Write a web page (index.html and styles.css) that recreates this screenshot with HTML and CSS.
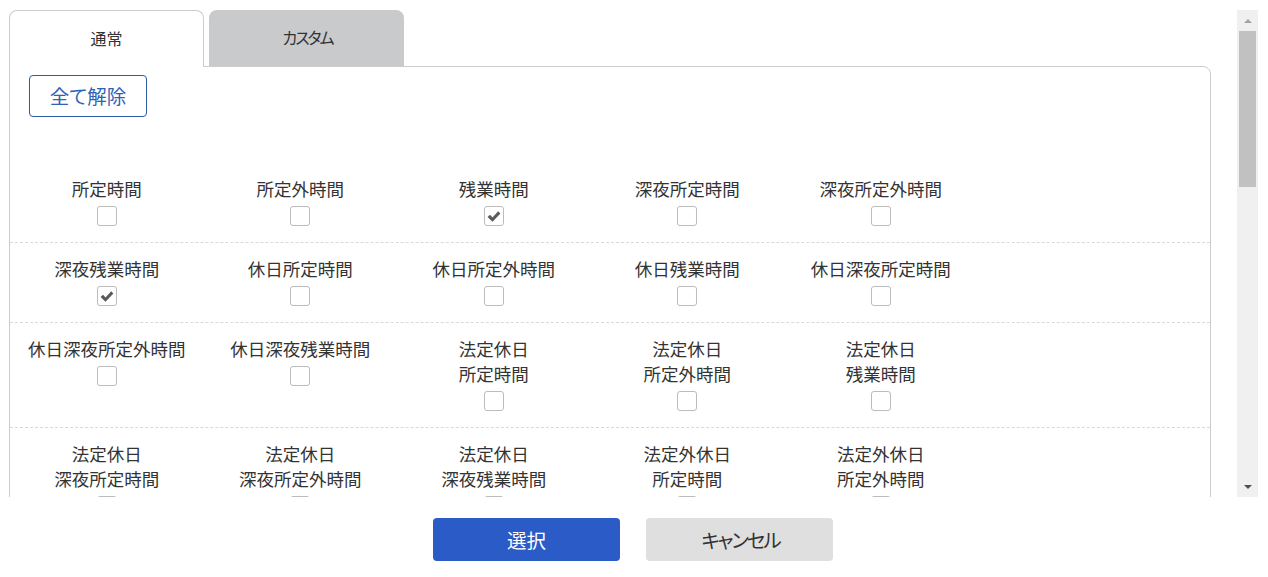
FILE: index.html
```html
<!DOCTYPE html>
<html lang="ja">
<head>
<meta charset="utf-8">
<title>選択</title>
<link rel="stylesheet" href="styles.css">
</head>
<body>
<div class="page">
  <div class="scroll-area">
    <div class="scroll-content">
      <div class="tabs">
        <div class="tab tab-active">通常</div>
        <div class="tab tab-inactive"><span class="kana">カスタム</span></div>
      </div>
      <div class="panel">
        <button class="btn-clear">全て解除</button>
        <div class="rows">
          <div class="row">
            <div class="cell"><div class="label">所定時間</div><span class="cb"></span></div>
            <div class="cell"><div class="label">所定外時間</div><span class="cb"></span></div>
            <div class="cell"><div class="label">残業時間</div><span class="cb checked"><svg viewBox="0 0 18 18"><path d="M2.6 10 L5 7.8 L7.5 10.4 L13.2 4.2 L15.4 6.4 L7.5 14.8 Z"/></svg></span></div>
            <div class="cell"><div class="label">深夜所定時間</div><span class="cb"></span></div>
            <div class="cell"><div class="label">深夜所定外時間</div><span class="cb"></span></div>
          </div>
          <div class="row">
            <div class="cell"><div class="label">深夜残業時間</div><span class="cb checked"><svg viewBox="0 0 18 18"><path d="M2.6 10 L5 7.8 L7.5 10.4 L13.2 4.2 L15.4 6.4 L7.5 14.8 Z"/></svg></span></div>
            <div class="cell"><div class="label">休日所定時間</div><span class="cb"></span></div>
            <div class="cell"><div class="label">休日所定外時間</div><span class="cb"></span></div>
            <div class="cell"><div class="label">休日残業時間</div><span class="cb"></span></div>
            <div class="cell"><div class="label">休日深夜所定時間</div><span class="cb"></span></div>
          </div>
          <div class="row">
            <div class="cell"><div class="label">休日深夜所定外時間</div><span class="cb"></span></div>
            <div class="cell"><div class="label">休日深夜残業時間</div><span class="cb"></span></div>
            <div class="cell"><div class="label">法定休日<br>所定時間</div><span class="cb"></span></div>
            <div class="cell"><div class="label">法定休日<br>所定外時間</div><span class="cb"></span></div>
            <div class="cell"><div class="label">法定休日<br>残業時間</div><span class="cb"></span></div>
          </div>
          <div class="row">
            <div class="cell"><div class="label">法定休日<br>深夜所定時間</div><span class="cb"></span></div>
            <div class="cell"><div class="label">法定休日<br>深夜所定外時間</div><span class="cb"></span></div>
            <div class="cell"><div class="label">法定休日<br>深夜残業時間</div><span class="cb"></span></div>
            <div class="cell"><div class="label">法定外休日<br>所定時間</div><span class="cb"></span></div>
            <div class="cell"><div class="label">法定外休日<br>所定外時間</div><span class="cb"></span></div>
          </div>
        </div>
      </div>
    </div>
    <div class="scrollbar">
      <div class="sb-btn"><span class="arrow-up"></span></div>
      <div class="sb-thumb"></div>
      <div class="sb-track"></div>
      <div class="sb-btn"><span class="arrow-down"></span></div>
    </div>
  </div>
  <div class="footer">
    <button class="btn btn-primary">選択</button>
    <button class="btn btn-secondary"><span class="kana">キャンセル</span></button>
  </div>
</div>
</body>
</html>
```
FILE: styles.css
```css
* { box-sizing: border-box; }
html, body {
  margin: 0;
  padding: 0;
  background: #fff;
  font-family: "Noto Sans CJK JP", "Noto Sans", sans-serif;
  color: #333;
}
.page {
  width: 1268px;
  height: 577px;
  overflow: hidden;
}
.scroll-area {
  display: flex;
  margin-top: 10px;
  width: 1258px;
  height: 487px;
}
.scroll-content {
  flex: 1;
  overflow: hidden;
  padding-left: 9px;
}
.tabs {
  display: flex;
  gap: 5px;
  height: 57px;
  margin-bottom: -1px;
  position: relative;
  z-index: 1;
}
.tab {
  width: 195px;
  display: flex;
  align-items: center;
  justify-content: center;
  font-size: 16px;
  color: #333;
  border-radius: 8px 8px 0 0;
  padding-bottom: 2px;
  font-feature-settings: "palt";
}
.kana {
  letter-spacing: -2px;
  margin-right: -2px;
}
.tab-active {
  height: 57px;
  background: #fff;
  border: 1px solid #ccc;
  border-bottom: none;
}
.tab-inactive {
  height: 56px;
  width: 195px;
  background: #c9cacc;
}
.panel {
  width: 1202px;
  border: 1px solid #ccc;
  border-radius: 0 8px 0 0;
  min-height: 600px;
}
.btn-clear {
  display: block;
  margin: 8px 0 0 19px;
  width: 118px;
  height: 42px;
  border: 1px solid #2c5ca8;
  border-radius: 4px;
  background: #fff;
  color: #2e62b4;
  font-family: inherit;
  font-size: 19.5px;
  padding: 0;
  line-height: 1;
  font-feature-settings: "palt";
}
.rows {
  margin-top: 46px;
}
.row {
  display: grid;
  grid-template-columns: repeat(5, 193.5px);
  padding: 13px 0 16px;
  border-bottom: 1px dashed #d9d9d9;
}
.cell {
  display: flex;
  flex-direction: column;
  align-items: center;
}
.label {
  font-size: 17.5px;
  line-height: 25px;
  text-align: center;
  color: #333;
  white-space: nowrap;
}
.cb {
  display: flex;
  align-items: center;
  justify-content: center;
  margin-top: 5px;
  width: 20px;
  height: 20px;
  border: 1px solid #bcbcbc;
  border-radius: 3px;
  background: #fff;
}
.cb svg {
  width: 18px;
  height: 18px;
  fill: #595959;
}
.scrollbar {
  width: 21px;
  display: flex;
  flex-direction: column;
  background: #f0f0f0;
}
.sb-btn {
  height: 21px;
  display: flex;
  align-items: center;
  justify-content: center;
}
.sb-thumb {
  height: 156px;
  margin: 0 2px;
  background: #c1c1c1;
}
.sb-track {
  flex: 1;
}
.arrow-up {
  width: 0;
  height: 0;
  border-left: 4px solid transparent;
  border-right: 4px solid transparent;
  border-bottom: 4px solid #a3a3a3;
}
.arrow-down {
  width: 0;
  height: 0;
  border-left: 4px solid transparent;
  border-right: 4px solid transparent;
  border-top: 4px solid #505050;
}
.footer {
  display: flex;
  justify-content: center;
  gap: 26px;
  padding-top: 21px;
  padding-right: 2px;
}
.btn {
  width: 187px;
  height: 43px;
  border: none;
  border-radius: 4px;
  font-family: inherit;
  font-size: 19.5px;
  padding: 0;
  line-height: 1;
  font-feature-settings: "palt";
}
.btn-primary {
  background: #2a5bc7;
  color: #fff;
}
.btn-secondary {
  background: #dfdfdf;
  color: #333;
}
```
